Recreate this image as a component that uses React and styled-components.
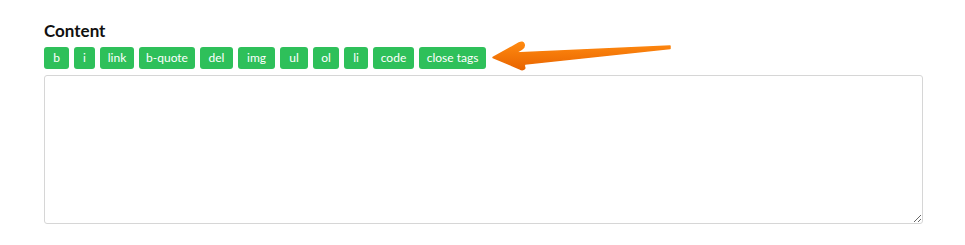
import React from 'react';
import styled, { createGlobalStyle } from 'styled-components';

const GlobalStyle = createGlobalStyle`
  html, body {
    margin: 0;
    padding: 0;
    background: #fff;
  }
  body {
    font-family: Lato, "Open Sans", "Liberation Sans", sans-serif;
  }
`;

const Page = styled.div`
  position: relative;
  width: 965px;
  height: 245px;
  padding: 21px 42px 0 44px;
  box-sizing: border-box;
`;

const Label = styled.label`
  display: block;
  font-size: 17px;
  line-height: 20px;
  font-weight: 700;
  color: #111;
`;

const Toolbar = styled.div`
  display: flex;
  gap: 5px;
  margin-top: 6px;
`;

const TagButton = styled.button`
  width: ${p => p.$w}px;
  height: 22px;
  padding: 0;
  border: 0;
  border-radius: 3px;
  background: #2ec05a;
  color: #fff;
  font-family: Lato, "Open Sans", sans-serif;
  font-size: 12px;
  line-height: 22px;
  text-align: center;
  white-space: nowrap;
  cursor: pointer;
`;

const Editor = styled.textarea`
  display: block;
  width: 879px;
  height: 149px;
  margin-top: 6px;
  box-sizing: border-box;
  border: 1px solid #d6d6d6;
  border-radius: 3px;
  resize: both;
  outline: none;
`;

const Arrow = styled.svg`
  position: absolute;
  left: 490px;
  top: 38px;
  overflow: visible;
`;

const tags = [
  ['b', 25],
  ['i', 21],
  ['link', 34],
  ['b-quote', 56],
  ['del', 33],
  ['img', 37],
  ['ul', 28],
  ['ol', 26],
  ['li', 24],
  ['code', 41],
  ['close tags', 67],
];

const App = () => (
  <Page>
    <GlobalStyle />
    <Label htmlFor="content">Content</Label>
    <Toolbar>
      {tags.map(([t, w]) => (
        <TagButton key={t} $w={w}>{t}</TagButton>
      ))}
    </Toolbar>
    <Editor id="content" />
    <Arrow width="185" height="36" viewBox="0 0 185 36">
      <defs>
        <linearGradient id="orange" x1="0" y1="0" x2="0" y2="1">
          <stop offset="0" stopColor="#ff8a10" />
          <stop offset="1" stopColor="#e86400" />
        </linearGradient>
      </defs>
      <path
        d="M3 19.5 L29 5 Q33 3 34 6 Q35 9 32 11 L25 15 L180 8 L180 10.5 L35 26 L34 28 Q36 31 33 31.5 Q31 32 29 30.5 Z"
        fill="url(#orange)"
        stroke="url(#orange)"
        strokeWidth="1.5"
        strokeLinejoin="round"
      />
    </Arrow>
  </Page>
);

export default App;
